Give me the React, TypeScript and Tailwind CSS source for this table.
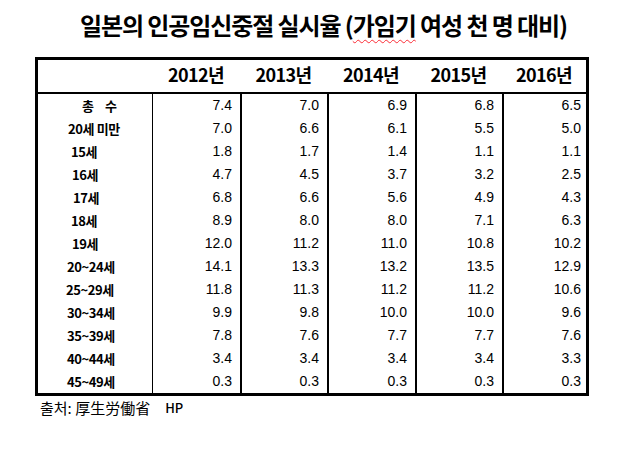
import React from 'react';

const years = ['2012년', '2013년', '2014년', '2015년', '2016년'];

const rows: { label: string; values: string[]; className?: string }[] = [
  { label: '총 수', values: ['7.4', '7.0', '6.9', '6.8', '6.5'], className: 'pl-[44px] tracking-[4px] font-bold' },
  { label: '20세 미만', values: ['7.0', '6.6', '6.1', '5.5', '5.0'], className: 'pl-[30px]' },
  { label: '15세', values: ['1.8', '1.7', '1.4', '1.1', '1.1'], className: 'pl-[33px]' },
  { label: '16세', values: ['4.7', '4.5', '3.7', '3.2', '2.5'], className: 'pl-[34px]' },
  { label: '17세', values: ['6.8', '6.6', '5.6', '4.9', '4.3'], className: 'pl-[35px]' },
  { label: '18세', values: ['8.9', '8.0', '8.0', '7.1', '6.3'], className: 'pl-[33px]' },
  { label: '19세', values: ['12.0', '11.2', '11.0', '10.8', '10.2'], className: 'pl-[34px]' },
  { label: '20~24세', values: ['14.1', '13.3', '13.2', '13.5', '12.9'], className: 'pl-[29px]' },
  { label: '25~29세', values: ['11.8', '11.3', '11.2', '11.2', '10.6'], className: 'pl-[28px]' },
  { label: '30~34세', values: ['9.9', '9.8', '10.0', '10.0', '9.6'], className: 'pl-[29px]' },
  { label: '35~39세', values: ['7.8', '7.6', '7.7', '7.7', '7.6'], className: 'pl-[29px]' },
  { label: '40~44세', values: ['3.4', '3.4', '3.4', '3.4', '3.3'], className: 'pl-[29px]' },
  { label: '45~49세', values: ['0.3', '0.3', '0.3', '0.3', '0.3'], className: 'pl-[29px]' },
];

const cols = 'grid grid-cols-[114px_88px_87px_88px_87px_84px]';
const valueBorders = ['border-l', 'border-l-2', 'border-l-2', 'border-l-2', 'border-l-2'];
const valuePad = ['pr-[8px]', 'pr-[8px]', 'pr-[8px]', 'pr-[8px]', 'pr-[5px]'];

export default function App() {
  return (
    <div className="w-[622px] h-[450px] bg-white text-black font-['Noto_Sans_CJK_KR',sans-serif]">
      <div className="h-[57px] pl-[80px] pt-[8px]">
        <h1 className="whitespace-nowrap text-[24px] leading-[34px] font-bold tracking-[-1.1px]">
          일본의 인공임신중절 실시율 (
          <span className="underline decoration-wavy decoration-red-500 decoration-1 underline-offset-[4px]">가임기</span>
          {' '}여성 천 명 대비)
        </h1>
      </div>

      <div className="ml-[35px] w-[554px] border-[3px] border-black">
        <div className={`${cols} h-[34px] border-b-2 border-black`}>
          <div />
          {years.map((y) => (
            <div key={y} className="flex items-center justify-center text-[18px] font-bold tracking-[-0.6px] pb-[4px]">
              {y}
            </div>
          ))}
        </div>
        {rows.map((r) => (
          <div key={r.label} className={`${cols} h-[23px]`}>
            <div className={`flex items-center text-[13px] font-semibold tracking-[-0.4px] whitespace-pre ${r.className ?? ''}`}>
              {r.label}
            </div>
            {r.values.map((v, i) => (
              <div
                key={i}
                className={`flex items-center justify-end border-black ${valueBorders[i]} ${valuePad[i]} font-['Liberation_Sans',Arial,sans-serif] text-[14px]`}
              >
                {v}
              </div>
            ))}
          </div>
        ))}
      </div>

      <div className="flex items-center pl-[40px] pt-[2px] text-[15px] leading-[20px] whitespace-nowrap">
        <span>출처: 厚生労働省</span>
        <span className="ml-[15px] text-[13px] font-medium">HP</span>
      </div>
    </div>
  );
}
